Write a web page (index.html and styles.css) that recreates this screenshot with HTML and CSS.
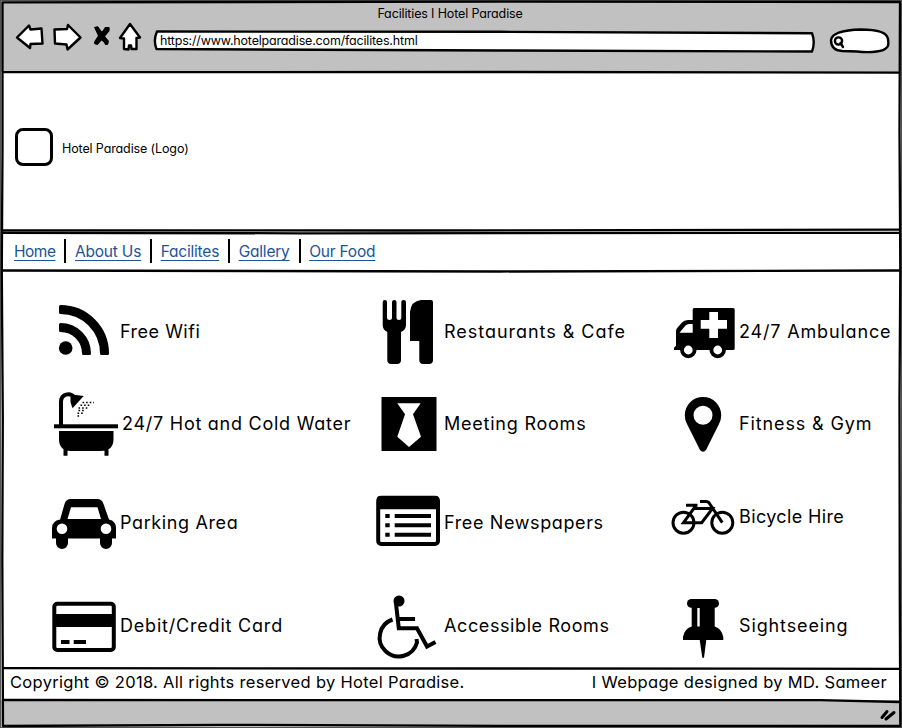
FILE: index.html
```html
<!DOCTYPE html>
<html lang="en">
<head>
<meta charset="utf-8">
<title>Facilities | Hotel Paradise</title>
<link rel="stylesheet" href="styles.css">
</head>
<body>
<div class="window">
  <header class="chrome">
    <div class="title"><span>Facilities I Hotel Paradise</span></div>
    <div class="toolbar">
      <svg class="controls" viewBox="10 20 135 34" width="135" height="34">
        <g class="sketch">
          <path d="M17 37.500L29 25.500L30.500 29.500L41.500 28.500L42.500 43.500L30.500 44L30 48Z"/>
          <path d="M54.500 29.500L67 29L68 25L80.500 37.500L67.500 49.500L66.500 44.500L55 43.500Z"/>
          <path d="M130 24L140 37.500L136.500 38L136.500 49L131.500 49L131 45.500L129 45.500L128.500 49.500L124 49L124 38.500L120 38Z"/>
        </g>
        <path class="cross" d="M97 28.500C100 33 104 38 106.500 43M107.500 29C103 33 98 39 96 42.500"/>
        <path d="M94 27L98 26.500L102 32L105 27L109.500 27L109.500 31L105 36.500L109 41L107.500 45L101.500 40.500L97.500 45L94 43.500L98 36Z"/>
      </svg>
      <div class="address">
        <svg viewBox="153 30 663 22" width="663" height="22"><path class="sketch" d="M157 31.500L500 31.800L812 33.200Q815.500 42 812 51.500L500 50.500L156.500 49Q153 40 157 31.500Z"/></svg>
        <span class="url">https://www.hotelparadise.com/facilites.html</span>
      </div>
      <svg class="search" viewBox="828 26 64 28" width="64" height="28">
        <path class="sketch" d="M831 40C832 33 843 30 861 29.500C876 29.500 887 31.500 888 39C889 46 888 47 885 49C880 52.500 866 52.500 857 51.500L842 51C834 50.500 831 46 831 40Z"/>
        <circle class="lens" cx="838.500" cy="41" r="3.600"/><path class="lens" d="M840.500 43L843 47"/>
      </svg>
    </div>
  </header>

  <section class="brand">
    <div class="logo"></div>
    <span class="logo-name">Hotel Paradise (Logo)</span>
  </section>

  <nav class="nav">
    <a href="#"><span>Home</span></a><a href="#"><span>About Us</span></a><a href="#"><span>Facilites</span></a><a href="#"><span>Gallery</span></a><a href="#"><span>Our Food</span></a>
  </nav>

  <main class="facilities">
    <div class="item wifi">
      <svg viewBox="52 299 66 66"><circle cx="65.700" cy="348" r="6.800"/><path class="soft" d="M60.500 306.500A47 47 0 0 1 107.500 353.500H101.500A41 41 0 0 0 60.500 312.500ZM60.500 324.500A29 29 0 0 1 89.500 353.500H83.500A23 23 0 0 0 60.500 330.500Z"/></svg>
      <span>Free Wifi</span>
    </div>
    <div class="item restaurant">
      <svg viewBox="376 299 66 66"><path d="M382.700 302Q382.700 300 385 300Q387 300 387 302V318Q387 320 389.500 320Q392 320 392 318V302Q392 300 394.300 300Q396.500 300 396.500 302V318Q396.500 320 399 320Q401.300 320 401.300 318V302Q401.300 300 403.700 300Q406 300 406 302V325Q406 330 401 332V360Q401 364 397 364H391.300Q387.300 364 387.300 360V332Q382.700 330 382.700 325ZM410 341V312Q411 301 421 300H431Q433 300 433 302V360Q433 364 429 364H423.300Q419.300 364 419.300 360V341Z"/></svg>
      <span>Restaurants &amp; Cafe</span>
    </div>
    <div class="item ambulance">
      <svg viewBox="671 299 66 66"><path d="M692.700 320V309.500Q692.700 308 694.200 308H733Q734.700 308 734.700 309.500V348.500Q734.700 350 733 350H674Q673.500 347 676 346V331Q676 329 678 327L682 322.500Q684 320 688 320Z"/><path class="paper" d="M692.700 324H689Q687 324 685.500 325.500L679.500 332.800H692.700ZM709.300 312H718V320H727V328.700H718V338H709.300V328.700H700.700V320H709.300Z"/><circle cx="688.300" cy="350" r="8.200"/><circle cx="717.700" cy="350" r="8.200"/><circle class="paper" cx="688.300" cy="350" r="4.400"/><circle class="paper" cx="717.700" cy="350" r="4.400"/></svg>
      <span>24/7 Ambulance</span>
    </div>

    <div class="item water">
      <svg viewBox="52 391 66 66"><path class="line w4" d="M61 426V402C61 394 70 392 74 397"/><path d="M70.500 397.500Q72 395 76 395L83.700 396L72.500 408.300L70.500 402Z"/><path class="drops" d="M82.500 402.500H94M80.500 405.200H90M78.500 407.900H88M78.500 410.600H85M77.500 413.300H83M77.500 416H80"/><rect x="54" y="424.300" width="64" height="4"/><path d="M59 431H113.500V439Q113.500 451 101 451H71Q59 451 59 439ZM63.500 448H67.500V455.700H63.500ZM104.500 448H108.500V455.700H104.500Z"/></svg>
      <span>24/7 Hot and Cold Water</span>
    </div>
    <div class="item meeting">
      <svg viewBox="376 391 66 66"><path d="M381.500 397H436.500V451H381.500Z"/><path class="paper" d="M397.300 403.300H420.700L413 414.300L421 436.700L409 447L397.300 436.700L405 414.300Z"/></svg>
      <span>Meeting Rooms</span>
    </div>
    <div class="item gym">
      <svg viewBox="671 391 66 66"><path fill-rule="evenodd" d="M703 397A18 18 0 0 1 721.200 415.500Q721.200 420 719 424L706 450Q703 453.500 700 450L687 424Q684.800 420 684.800 415.500A18 18 0 0 1 703 397ZM703 405.800A9.500 9.500 0 1 0 703 424.800A9.500 9.500 0 1 0 703 405.800Z"/></svg>
      <span>Fitness &amp; Gym</span>
    </div>

    <div class="item parking">
      <svg viewBox="52 490 66 66"><path d="M60 520L64.500 504Q66 499 71 499H97Q102 499 103.500 504L109 519.500Q116 521 116 528V538.500H112V543A6 6 0 0 1 100 543V538.500H68V543A6 6 0 0 1 56 543V538.500H52V528Q52 521 60 519.500Z"/><path class="paper" d="M71 507.300H97.500L101 519H67.500Z"/><circle class="paper" cx="62" cy="528.700" r="5.300"/><circle class="paper" cx="106" cy="528.700" r="5.300"/></svg>
      <span>Parking Area</span>
    </div>
    <div class="item news">
      <svg viewBox="376 490 66 66"><rect class="line w4" x="378.200" y="497.700" width="59.800" height="46.300" rx="3"/><path d="M377 499Q377 496 380 496H436Q439 496 439 499V509.200H377Z"/><path class="line w4" d="M385.300 516H389.700M385.300 525.200H389.700M385.300 534.700H389.700M394.700 516H431M394.700 525.200H431M394.700 534.700H431"/></svg>
      <span>Free Newspapers</span>
    </div>
    <div class="item bicycle">
      <svg viewBox="671 490 66 66"><g class="line w3"><circle cx="683.500" cy="522.700" r="10.500"/><circle cx="722.300" cy="522.700" r="10.500"/><path d="M686 505.300H697.500M700 501.500H706Q708.500 501.500 709.500 503.500L722.300 522.700M695.500 505.500L693.500 509L683.500 522.700H701.700L712.500 508.500H694"/></g></svg>
      <span>Bicycle Hire</span>
    </div>

    <div class="item card">
      <svg viewBox="52 594 66 66"><rect class="line w4" x="54.300" y="603.700" width="59.500" height="46.300" rx="3"/><path d="M53 614H115V627H53ZM61 640H69.500V644H61ZM73.700 640H86V644H73.700Z"/></svg>
      <span>Debit/Credit Card</span>
    </div>
    <div class="item access">
      <svg viewBox="376 594 66 66"><circle cx="399" cy="601" r="5.500"/><path class="line w4" d="M395.800 602L398.800 628.300H417L427 646.500L435.500 642M398.500 619H415M392.500 619.500A19 19 0 1 0 417 642.500L416.500 639"/></svg>
      <span>Accessible Rooms</span>
    </div>
    <div class="item sights">
      <svg viewBox="671 594 66 66"><rect x="687" y="599" width="32" height="8.800" rx="4.400"/><path d="M691.700 606H714.700V626.500Q722 629 723.300 637V640H706.300L704 657.700H702.300L699.700 640H683V637Q684 629 691.700 626.500Z"/><rect class="paper" x="697.300" y="608" width="2.400" height="18.500"/></svg>
      <span>Sightseeing</span>
    </div>
  </main>

  <footer class="footer">
    <span class="copyright">Copyright © 2018. All rights reserved by Hotel Paradise.</span>
    <span class="credit">I Webpage designed by MD. Sameer</span>
  </footer>
  <div class="status">
    <svg viewBox="878 706 20 18" width="20" height="18"><path class="grip" d="M882 717.500L887 711.500M886 719L894 712.500"/></svg>
  </div>

  <svg class="frame" viewBox="0 0 902 728" width="902" height="728">
    <path class="edge" d="M0 0H902V728H0Z"/>
    <path class="rules" d="M2.500 2.300L500 1.700L900 2L899.500 130L900.300 270L899.500 400L899.800 600L900.300 726L500 725.800L220 724.800L3 726L2.300 560L2.800 420L1.800 270L2.500 150Z"/>
    <path class="rules" d="M2 72.200L500 72L900 72.700M2 230.300L400 230.500L900 229.700M2 232.800L300 233.300L900 232.800M2 270.500L500 271.500L900 270.500M2 668.200L500 668.500L900 668.800M2 700L820 700.200L900 702"/>
  </svg>
</div>
</body>
</html>
```

FILE: styles.css
```css
* { box-sizing: border-box; }
body { margin: 0; background: #fff; }
.window {
  position: relative;
  display: grid;
  grid-template-rows: 72px 159px 40px 397px 32px 28px;
  width: 902px;
  height: 728px;
  overflow: hidden;
  color: #000;
  font-family: Inter, "Liberation Sans", sans-serif;
  font-feature-settings: "cv11";
  font-size: 18px;
  white-space: nowrap;
}
svg { display: block; overflow: visible; flex: none; }
.sketch { fill: #fff; stroke: #000; stroke-width: 2.4; stroke-linejoin: round; }
.cross { fill: none; stroke: #000; stroke-width: 4; stroke-linecap: round; }
.lens { fill: none; stroke: #000; stroke-width: 2.4; stroke-linecap: round; }
.paper { fill: #fff; }
.soft { stroke: #000; stroke-width: 3; stroke-linejoin: round; }
.line { fill: none; stroke: #000; }
.w4 { stroke-width: 4; }
.w3 { stroke-width: 3; }
.drops { fill: none; stroke: #000; stroke-width: 1.5; stroke-dasharray: 1.6 2; }

.chrome { background: #c1c1c1; }
.title { height: 20px; padding: 4px 2px 0 0; text-align: center; font-size: 12.5px; line-height: 19px; letter-spacing: -.14px; }
.toolbar { display: flex; padding-left: 10px; }
.address { display: grid; width: 663px; margin: 10px 0 0 8px; }
.address > * { grid-area: 1 / 1; }
.url { position: relative; padding-left: 7px; font-size: 12.5px; line-height: 21px; letter-spacing: -.18px; }
.search { margin: 6px 0 0 12px; }

.brand { display: flex; align-items: center; padding: 0 0 9px 15px; }
.logo { width: 38px; height: 38px; border: 3px solid #000; border-radius: 8px; }
.logo-name { margin-left: 9px; padding-top: 2px; font-size: 12.5px; letter-spacing: -.12px; }

.nav { display: flex; align-items: center; padding-left: 14px; font-size: 15.5px; letter-spacing: -.2px; }
.nav a { height: 24px; color: #1b5497; line-height: 25px; text-decoration: underline; text-decoration-thickness: 1px; text-underline-offset: 3px; }
.nav a + a { margin-left: 9px; padding-left: 8.5px; border-left: 2px solid #000; }
.nav a:first-child { letter-spacing: -.5px; }

.facilities {
  display: grid;
  grid-template-columns: 324px 295px 231px;
  grid-template-rows: 92px 99px 104px 66px;
  padding: 28px 0 0 52px;
}
.item { display: flex; align-items: center; height: 66px; }
.item svg { width: 66px; height: 66px; }
.item span { margin-left: 2px; padding-bottom: 2px; }
.wifi span { letter-spacing: .5px; }
.restaurant span { letter-spacing: .97px; }
.ambulance span { letter-spacing: .83px; }
.water span { margin-left: 4px; letter-spacing: .74px; }
.meeting span { letter-spacing: .77px; }
.gym span { letter-spacing: .88px; }
.parking span { letter-spacing: .62px; }
.news span { letter-spacing: .62px; }
.bicycle span { padding-bottom: 14px; letter-spacing: .37px; }
.card span, .access span, .sights span { padding-bottom: 4px; }
.card span { letter-spacing: .8px; }
.access span { letter-spacing: .6px; }
.sights span { letter-spacing: .88px; }

.footer { display: flex; justify-content: space-between; align-items: center; padding: 0 15px 4px 10px; font-size: 16.5px; letter-spacing: .31px; }
.status { display: flex; justify-content: flex-end; padding: 6px 4px 0 0; background: #c1c1c1; }
.grip { stroke: #000; stroke-width: 3; stroke-linecap: round; }
.frame { position: absolute; inset: 0; pointer-events: none; }
.edge { fill: none; stroke: #555; stroke-width: 2; }
.rules { fill: none; stroke: #000; stroke-width: 2.3; stroke-linejoin: round; }
```
